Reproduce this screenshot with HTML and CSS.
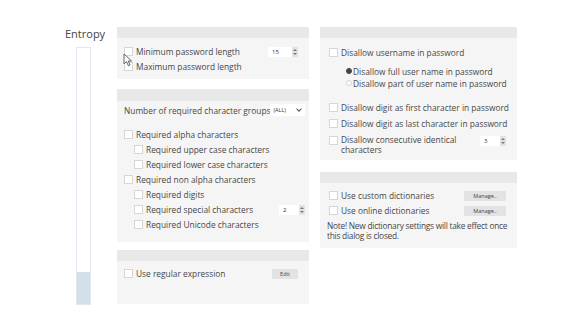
FILE: index.html
```html
<!DOCTYPE html>
<html lang="en">
<head>
    <meta charset="UTF-8">
    <title>Password Policy</title>
    <link rel="stylesheet" href="styles.css">
</head>
<body>
    <div class="page">
        <!-- Entropy meter -->
        <div class="entropy">
            <div class="entropy-label">Entropy</div>
            <div class="entropy-bar">
                <div class="entropy-fill" style="height: 32px"></div>
            </div>
        </div>

        <!-- Left column -->
        <div class="column column-left">
            <div class="panel">
                <div class="panel-head"></div>
                <div class="panel-body body-length">
                    <div class="row">
                        <span class="check"></span>
                        <span class="label">Minimum password length</span>
                        <span class="spin"><span class="spin-value">15</span><span class="spin-arrows"></span></span>
                    </div>
                    <div class="row">
                        <span class="check"></span>
                        <span class="label">Maximum password length</span>
                    </div>
                    <svg class="cursor" width="10" height="14" viewBox="0 0 10 14">
                        <path d="M1 1 L1 11 L3.5 8.6 L5.4 12.8 L7 12 L5.2 8 L8.6 8 Z" fill="#fff" stroke="#555" stroke-width="0.9" stroke-linejoin="round"/>
                    </svg>
                </div>
            </div>

            <div class="panel">
                <div class="panel-head head-tall"></div>
                <div class="panel-body body-groups">
                    <div class="select-row">
                        <span class="label">Number of required character groups</span>
                        <span class="select"><span class="select-value">(ALL)</span><span class="chevron"></span></span>
                    </div>
                    <div class="row">
                        <span class="check"></span>
                        <span class="label">Required alpha characters</span>
                    </div>
                    <div class="row indent">
                        <span class="check"></span>
                        <span class="label">Required upper case characters</span>
                    </div>
                    <div class="row indent">
                        <span class="check"></span>
                        <span class="label">Required lower case characters</span>
                    </div>
                    <div class="row">
                        <span class="check"></span>
                        <span class="label">Required non alpha characters</span>
                    </div>
                    <div class="row indent">
                        <span class="check"></span>
                        <span class="label">Required digits</span>
                    </div>
                    <div class="row indent">
                        <span class="check"></span>
                        <span class="label">Required special characters</span>
                        <span class="spin spin-narrow"><span class="spin-value">2</span><span class="spin-arrows"></span></span>
                    </div>
                    <div class="row indent">
                        <span class="check"></span>
                        <span class="label">Required Unicode characters</span>
                    </div>
                </div>
            </div>

            <div class="panel">
                <div class="panel-head"></div>
                <div class="panel-body body-regex">
                    <div class="row">
                        <span class="check"></span>
                        <span class="label">Use regular expression</span>
                        <button class="btn btn-edit">Edit</button>
                    </div>
                </div>
            </div>
        </div>

        <!-- Right column -->
        <div class="column column-right">
            <div class="panel">
                <div class="panel-head"></div>
                <div class="panel-body body-user">
                    <div class="row">
                        <span class="check"></span>
                        <span class="label">Disallow username in password</span>
                    </div>
                    <div class="radio-group">
                        <div class="radio-row">
                            <span class="radio on"></span>
                            <span class="label">Disallow full user name in password</span>
                        </div>
                        <div class="radio-row">
                            <span class="radio"></span>
                            <span class="label">Disallow part of user name in password</span>
                        </div>
                    </div>
                    <div class="row row-16 first-digit">
                        <span class="check"></span>
                        <span class="label">Disallow digit as first character in password</span>
                    </div>
                    <div class="row row-16">
                        <span class="check"></span>
                        <span class="label">Disallow digit as last character in password</span>
                    </div>
                    <div class="row row-multi">
                        <span class="check"></span>
                        <span class="label">Disallow consecutive identical<br>characters</span>
                        <span class="spin spin-narrow"><span class="spin-value">3</span><span class="spin-arrows"></span></span>
                    </div>
                </div>
            </div>

            <div class="panel">
                <div class="panel-head"></div>
                <div class="panel-body body-dict">
                    <div class="row">
                        <span class="check"></span>
                        <span class="label">Use custom dictionaries</span>
                        <button class="btn btn-manage">Manage..</button>
                    </div>
                    <div class="row">
                        <span class="check"></span>
                        <span class="label">Use online dictionaries</span>
                        <button class="btn btn-manage">Manage..</button>
                    </div>
                    <p class="note">Note! New dictionary settings will take effect once<br>this dialog is closed.</p>
                </div>
            </div>
        </div>
    </div>
</body>
</html>
```

FILE: styles.css
```css
body {
    margin: 0;
    font-family: "Open Sans", "Liberation Sans", sans-serif;
    background-color: #fff;
    color: #474747;
}

.page {
    display: flex;
    align-items: flex-start;
    padding: 27px 0 0 65px;
}

/* Entropy meter */
.entropy {
    width: 52px;
    flex: 0 0 auto;
}

.entropy-label {
    font-size: 11px;
    line-height: 14px;
    color: #444;
}

.entropy-bar {
    margin: 6px 0 0 11px;
    width: 13px;
    height: 256px;
    border: 1px solid #e1e7ee;
    display: flex;
    flex-direction: column;
    justify-content: flex-end;
}

.entropy-fill {
    background-color: #d3e0e9;
}

/* Columns */
.column {
    display: flex;
    flex-direction: column;
    flex: 0 0 auto;
}

.column-left {
    width: 192px;
    gap: 10px;
}

.column-right {
    width: 197px;
    margin-left: 11px;
    gap: 12px;
}

.column-left .panel + .panel + .panel {
    margin-top: -2px;
}

/* Panels */
.panel {
    background-color: #f5f5f5;
}

.panel-head {
    height: 11px;
    background-color: #e8e8e8;
}

.panel-head.head-tall {
    height: 12px;
}

.panel-body {
    position: relative;
    box-sizing: border-box;
    padding: 0 11px 0 7px;
    font-size: 8.35px;
}

.body-length {
    height: 41px;
    padding-top: 6px;
}

.body-groups {
    height: 141px;
    padding-top: 3px;
    padding-right: 4px;
}

.body-regex {
    height: 43px;
    padding-top: 5px;
}

.body-user {
    height: 122px;
    padding-top: 7px;
    padding-left: 9px;
}

.body-dict {
    height: 65px;
    padding-top: 5px;
    padding-left: 9px;
    padding-right: 6px;
}

/* Rows */
.row {
    display: flex;
    align-items: center;
    height: 15px;
}

.row.indent {
    padding-left: 10px;
}

.row-16 {
    height: 16px;
}

.first-digit {
    margin-top: 10px;
}

.row-multi {
    height: auto;
    align-items: flex-start;
    padding-top: 4px;
    line-height: 10px;
}

.row-multi .check,
.row-multi .spin {
    margin-top: 1px;
}

.body-dict .row {
    padding-right: 5px;
}

.check {
    width: 7px;
    height: 7px;
    border: 1px solid #d6d6d6;
    background-color: #fff;
    flex: 0 0 auto;
    margin-right: 3px;
}

.label {
    flex: 1 1 auto;
    white-space: nowrap;
}

/* Radios */
.radio-group {
    margin-top: 5px;
    padding-left: 17px;
}

.radio-row {
    display: flex;
    align-items: center;
    height: 12px;
}

.radio {
    width: 4px;
    height: 4px;
    border-radius: 50%;
    border: 0.5px solid #d4d4d4;
    background-color: #fff;
    margin-right: 1px;
    flex: 0 0 auto;
}

.radio.on {
    background-color: #444;
    border-color: #444;
}

/* Number spinners */
.spin {
    display: flex;
    align-items: center;
    width: 30px;
    height: 10px;
    background-color: #fff;
    flex: 0 0 auto;
}

.spin-narrow {
    width: 26px;
}

.spin-value {
    flex: 1 1 auto;
    font-size: 6px;
    padding-left: 4px;
    color: #333;
}

.spin-arrows {
    width: 6px;
    height: 10px;
    background-color: #e2e2e2;
    position: relative;
}

.spin-arrows::before,
.spin-arrows::after {
    content: "";
    position: absolute;
    left: 1px;
    border-left: 2px solid transparent;
    border-right: 2px solid transparent;
}

.spin-arrows::before {
    top: 2px;
    border-bottom: 2px solid #777;
}

.spin-arrows::after {
    bottom: 2px;
    border-top: 2px solid #777;
}

/* Select */
.select-row {
    display: flex;
    align-items: center;
    justify-content: space-between;
    height: 12px;
    margin-bottom: 11px;
}

.select-row .label {
    flex: 0 0 auto;
}

.select {
    display: flex;
    align-items: center;
    justify-content: space-between;
    width: 36px;
    height: 12px;
    padding: 0 4px 0 3px;
    box-sizing: border-box;
    background-color: #fff;
}

.select-value {
    font-size: 5.5px;
    color: #333;
}

.chevron {
    width: 3px;
    height: 3px;
    border-right: 1px solid #555;
    border-bottom: 1px solid #555;
    transform: rotate(45deg);
    margin-top: -2px;
}

/* Buttons */
.btn {
    font-family: inherit;
    font-size: 5.5px;
    color: #444;
    background-color: #e3e3e3;
    border: none;
    padding: 0;
    height: 10px;
    flex: 0 0 auto;
}

.btn-edit {
    width: 26px;
}

.btn-manage {
    width: 42px;
}

.note {
    margin: 3px 0 0 -2px;
    line-height: 9.5px;
    letter-spacing: -0.25px;
    white-space: nowrap;
}

/* Mouse pointer over the first checkbox */
.cursor {
    position: absolute;
    left: 6px;
    top: 15px;
}
```
